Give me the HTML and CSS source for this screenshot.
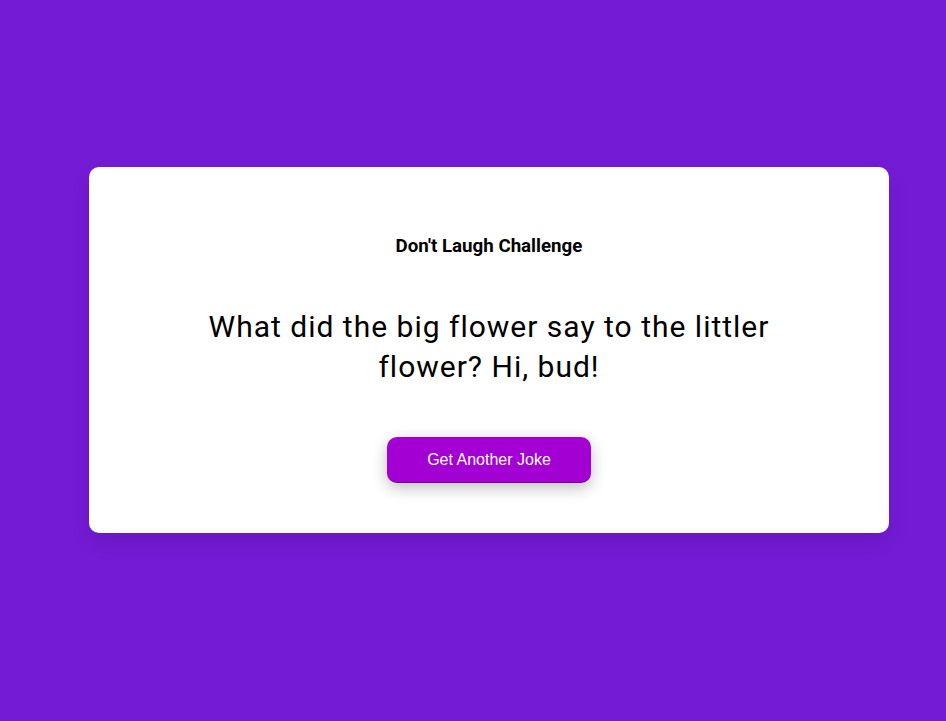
FILE: index.html
```html
<!DOCTYPE html>
<html lang="en">
<head>
<meta charset="UTF-8">
<title>Dad Jokes</title>
<link rel="stylesheet" href="styles.css">
</head>
<body>
  <div class="container">
    <h3 class="title">Don't Laugh Challenge</h3>
    <div class="joke">What did the big flower say to the littler flower? Hi, bud!</div>
    <button class="btn">Get Another Joke</button>
  </div>
</body>
</html>
```
FILE: styles.css
```css
* { box-sizing: border-box; }
body {
  margin: 0;
  height: 100vh;
  background: #741bd6;
  font-family: Roboto, "Liberation Sans", sans-serif;
  display: flex;
  align-items: center;
  justify-content: center;
  padding: 0 0 21px 32px;
  overflow: hidden;
}
.container {
  background: #fff;
  border-radius: 10px;
  box-shadow: 0 10px 20px rgba(0, 0, 0, 0.1);
  padding: 50px 20px;
  text-align: center;
  width: 800px;
}
.title {
  font-size: 18.72px;
  font-weight: 700;
  color: #000;
  margin: 18.72px 0 0;
}
.joke {
  font-size: 30px;
  letter-spacing: 1px;
  line-height: 40px;
  margin: 50px auto;
  max-width: 600px;
  color: #000;
}
.btn {
  background: #a300d4;
  color: #fff;
  border: 0;
  border-radius: 10px;
  box-shadow: inset 0 -1px 0 rgba(0, 0, 0, 0.25), 0 5px 15px rgba(0, 0, 0, 0.25);
  padding: 14px 40px;
  font-family: "Liberation Sans", Arial, sans-serif;
  font-size: 16px;
  cursor: pointer;
}
```
